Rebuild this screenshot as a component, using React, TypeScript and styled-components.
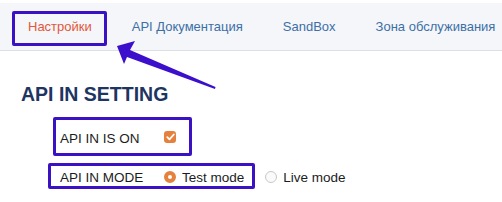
import { FC } from 'react'
import styled, { createGlobalStyle } from 'styled-components'

const GlobalStyle = createGlobalStyle`
	body {
		margin: 0;
		background: #fff;
		font-family: 'Liberation Sans', Arial, sans-serif;
	}
`

const Page = styled.div`
	position: relative;
	width: 502px;
	height: 202px;
	padding-top: 3px;
	box-sizing: border-box;
	overflow: hidden;
`

const TabBar = styled.nav`
	display: flex;
	align-items: center;
	height: 47px;
	padding-left: 8px;
	background: #f4f6f9;
	border-bottom: 1px solid #dcdfe3;
`

const Tab = styled.a<{ $active?: boolean }>`
	position: relative;
	padding: 0 20px;
	font-size: 13px;
	line-height: 16px;
	color: ${({ $active }) => ($active ? '#e2573b' : '#3d6fa6')};
	text-decoration: none;
	white-space: nowrap;
`

const Mark = styled.span`
	position: absolute;
	border: 3px solid #3a12c4;
	border-radius: 2px;
	pointer-events: none;
`

const TabMark = styled(Mark)`
	left: 4px;
	top: -8px;
	width: 89px;
	height: 29px;
`

const Section = styled.section`
	padding: 32px 0 0 21px;
`

const Heading = styled.h2`
	margin: 0;
	font-size: 19.5px;
	line-height: 22px;
	font-weight: bold;
	color: #1e3562;
`

const Form = styled.div`
	display: flex;
	flex-direction: column;
	gap: 19px;
	padding: 23px 0 0 39px;
`

const Row = styled.div`
	position: relative;
	display: flex;
	align-items: center;
	height: 20px;
	font-size: 13.5px;
	color: #1c1c1c;
`

const Label = styled.span`
	width: 104px;
`

const Check = styled.span`
	display: inline-flex;
	align-items: center;
	justify-content: center;
	width: 12px;
	height: 12px;
	border-radius: 3px;
	background: #e5813d;
	margin-top: -2px;
`

const Radio = styled.span<{ $checked?: boolean }>`
	box-sizing: border-box;
	width: 12px;
	height: 12px;
	border-radius: 50%;
	margin-right: 6px;
	background: ${({ $checked }) => ($checked ? '#fff' : '#fafafa')};
	border: ${({ $checked }) => ($checked ? '4px solid #e5813d' : '1px solid #c9c9c9')};
`

const Option = styled.label<{ $gap?: number }>`
	display: flex;
	align-items: center;
	margin-right: ${({ $gap }) => $gap ?? 0}px;
`

const RowMark = styled(Mark)<{ $left: number; $width: number; $top: number; $height: number }>`
	left: ${({ $left }) => $left}px;
	top: ${({ $top }) => $top}px;
	width: ${({ $width }) => $width}px;
	height: ${({ $height }) => $height}px;
`

const Pointer = styled.svg`
	position: absolute;
	left: 0;
	top: 0;
	pointer-events: none;
`

export const App: FC = () => {
	return (
		<Page>
			<GlobalStyle />
			<TabBar>
				<Tab $active href="#">
					Настройки
					<TabMark />
				</Tab>
				<Tab href="#">API Документация</Tab>
				<Tab href="#">SandBox</Tab>
				<Tab href="#">Зона обслуживания</Tab>
			</TabBar>
			<Section>
				<Heading>API IN SETTING</Heading>
				<Form>
					<Row>
						<RowMark $left={-7} $top={-11} $width={133} $height={33} />
						<Label>API IN IS ON</Label>
						<Check>
							<svg width="9" height="8" viewBox="0 0 9 8">
								<path d="M1.3 4.2 L3.5 6.3 L7.8 1.5" fill="none" stroke="#fff" strokeWidth="1.8" strokeLinecap="round" strokeLinejoin="round" />
							</svg>
						</Check>
					</Row>
					<Row>
						<RowMark $left={-12} $top={-4} $width={201} $height={20} />
						<Label>API IN MODE</Label>
						<Option $gap={21}>
							<Radio $checked />
							Test mode
						</Option>
						<Option>
							<Radio />
							Live mode
						</Option>
					</Row>
				</Form>
			</Section>
			<Pointer width="502" height="202" viewBox="0 0 502 202">
				<path d="M117 46 L135 41 L130 50 L215.5 87 L215 89 L127 57 L124 64 Z" fill="#3b0fcb" />
			</Pointer>
		</Page>
	)
}

export default App
